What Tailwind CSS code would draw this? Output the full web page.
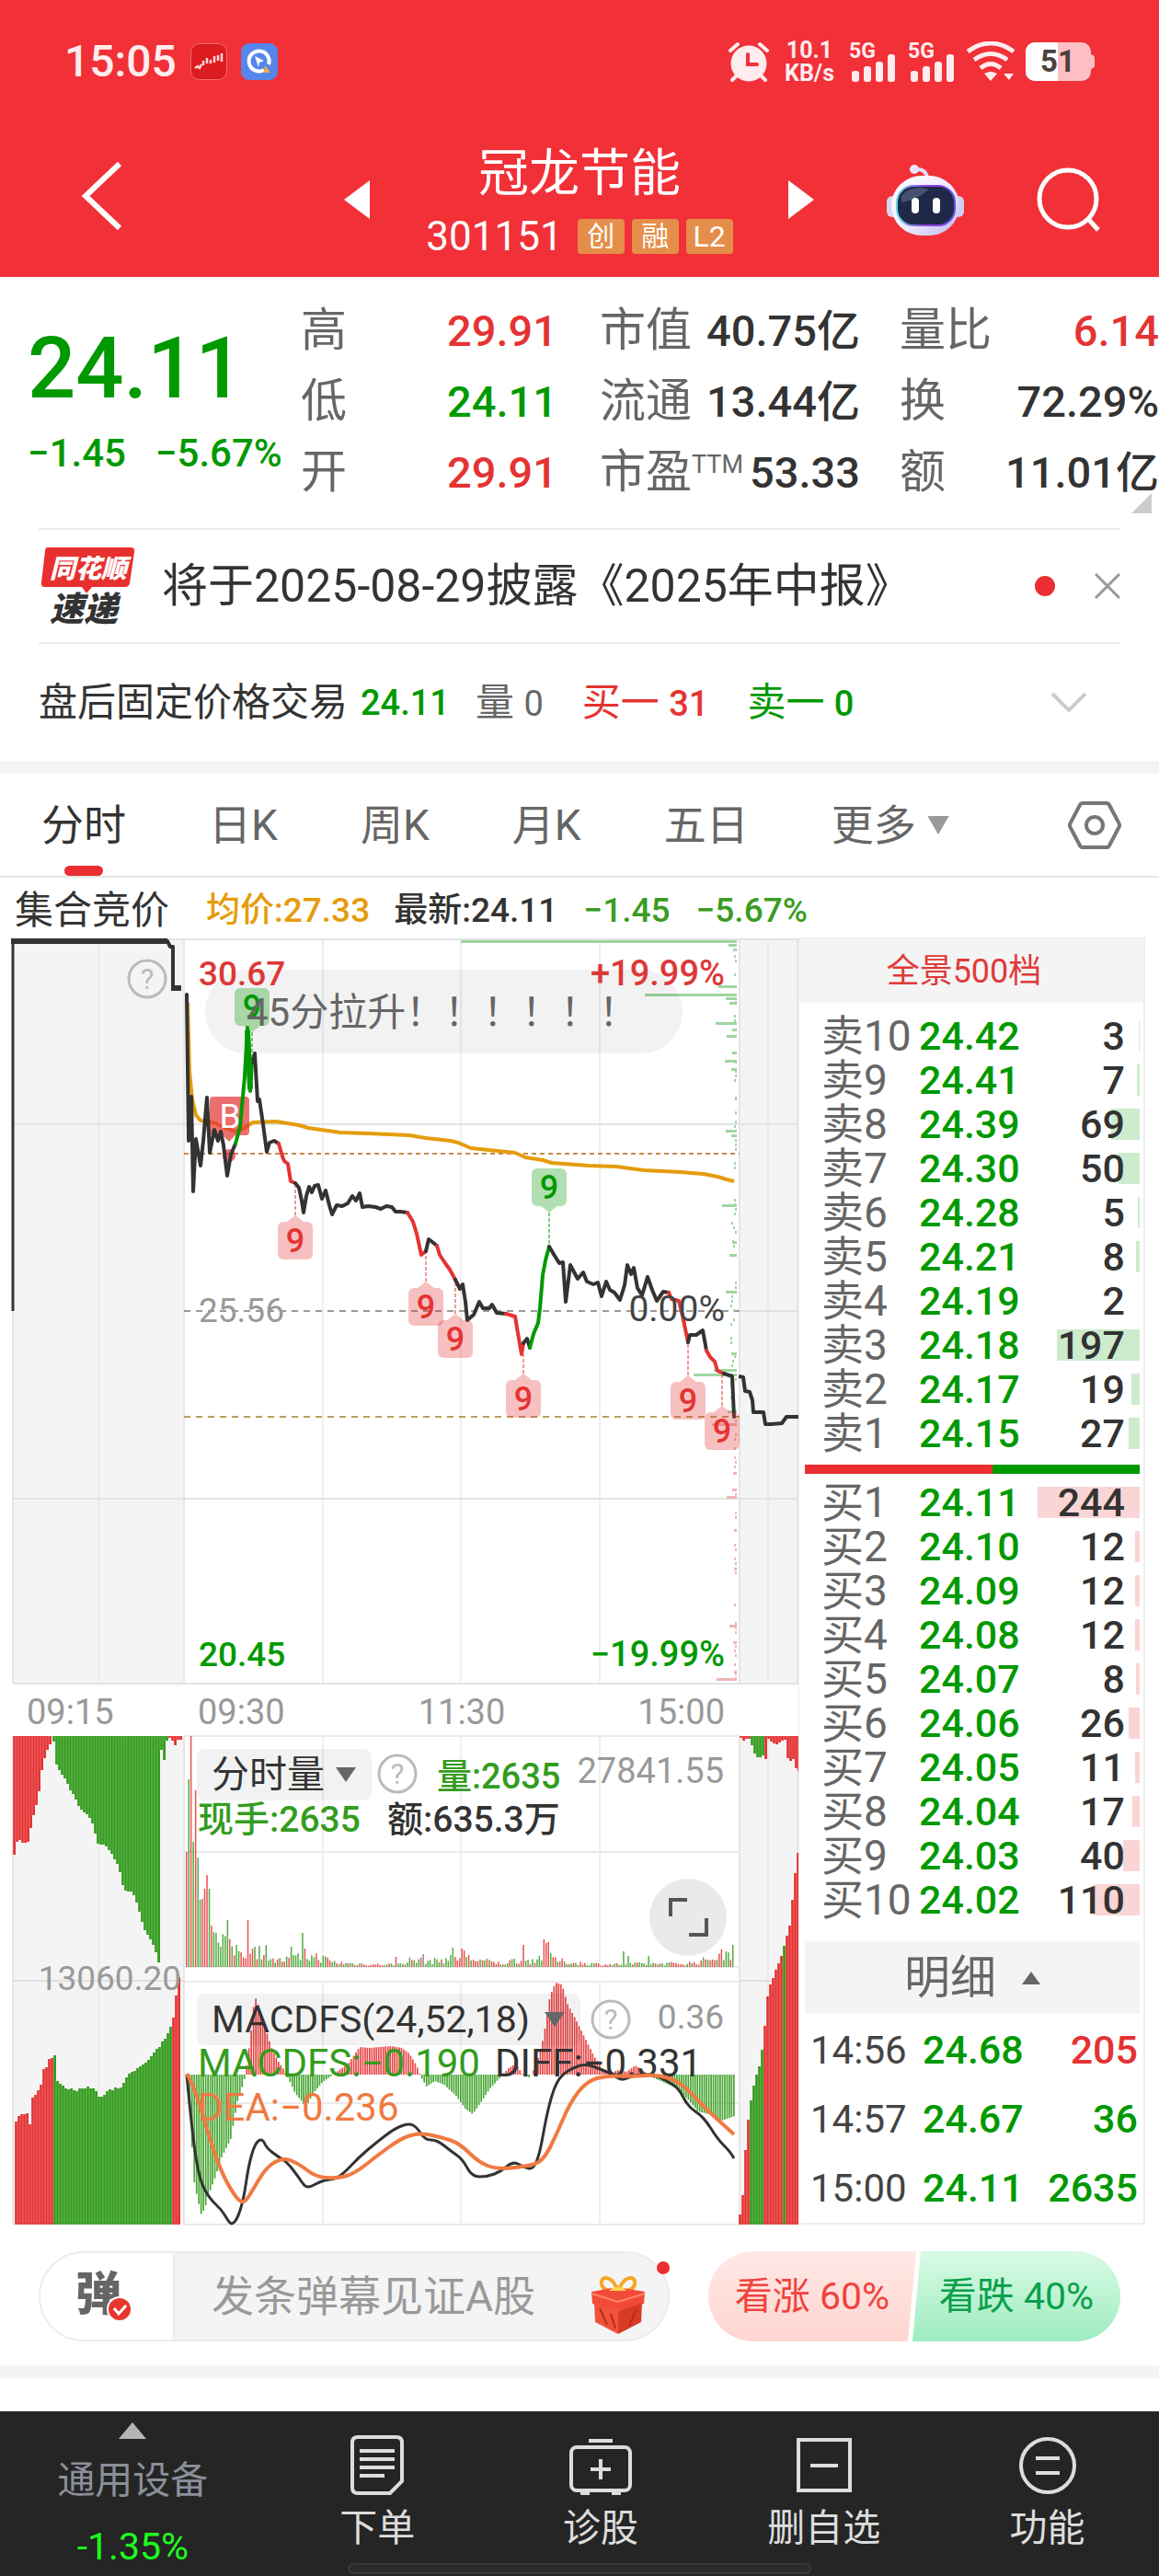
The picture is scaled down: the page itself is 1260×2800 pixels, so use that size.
<!DOCTYPE html>
<html lang="zh-CN">
<head>
<meta charset="utf-8">
<meta name="viewport" content="width=device-width, initial-scale=1">
<title>冠龙节能 301151</title>
<script src="https://cdn.jsdelivr.net/npm/@tailwindcss/browser@4"></script>
</head>
<body class="bg-white text-[#333] font-['Roboto','Noto_Sans_CJK_SC',sans-serif]">
<div class="flex min-h-screen flex-col">

<header class="bg-[#f23038] text-white">
  <div class="flex h-[133px] items-center justify-between pl-[70px] pr-[70px]">
    <div class="flex items-center gap-[15px]">
      <span class="text-[48px] font-medium leading-none text-[#ffecec]">15:05</span>
      <svg class="size-10" viewBox="0 0 40 40"><rect x=".5" y=".5" width="39" height="39" rx="9" fill="#dc1c1f" stroke="#f56b6b"/><path d="M5 27l3-2 2 2 2-4M14 24v-5M18 22v-6M22 22v-4M26 21v-7M30 19v-6M34 20V11" fill="none" stroke="#ffd5d5" stroke-width="2.5"/></svg>
      <svg class="size-10" viewBox="0 0 40 40"><rect width="40" height="40" rx="9" fill="#5586ea"/><path d="M25 29a11 11 0 1 1 5-6" fill="none" stroke="#fff" stroke-width="4"/><path d="M15 14l10 5-5 2-1 5z" fill="#fff"/><path d="M26 24l6 8-7 0z" fill="#f7ab3c"/></svg>
    </div>
    <div class="flex items-center text-[#ffecee]">
      <svg class="h-[44px] w-[46px]" viewBox="0 0 46 44"><circle cx="23" cy="24" r="19.500" fill="currentColor"/><path d="M3 10l8-7M43 10l-8-7M10 37l-5 5M36 37l5 5" stroke="currentColor" stroke-width="4" stroke-linecap="round"/><path d="M22 14v11h10" fill="none" stroke="#f23038" stroke-width="4" stroke-linecap="round"/></svg>
      <div class="ml-4 w-[54px] text-center text-[25px] font-bold leading-[25px]">10.1<br>KB/s</div>
      <svg class="ml-4 h-[44px] w-[52px] overflow-visible" viewBox="0 0 52 44"><g fill="currentColor"><text x="0" y="18" font-size="23" font-weight="700">5G</text><rect x="3" y="32" width="8" height="12" rx="3"/><rect x="16" y="27" width="8" height="17" rx="3"/><rect x="29" y="22" width="8" height="22" rx="3"/><rect x="42" y="14" width="8" height="30" rx="3"/></g></svg>
      <svg class="ml-3 h-[44px] w-[52px] overflow-visible" viewBox="0 0 52 44"><g fill="currentColor"><text x="0" y="18" font-size="23" font-weight="700">5G</text><rect x="3" y="32" width="8" height="12" rx="3"/><rect x="16" y="27" width="8" height="17" rx="3"/><rect x="29" y="22" width="8" height="22" rx="3"/><rect x="42" y="14" width="8" height="30" rx="3"/></g></svg>
      <svg class="ml-3 h-[44px] w-[52px]" viewBox="0 0 52 44"><g fill="none" stroke="currentColor" stroke-width="5"><path d="M1 11Q26-7 51 11"/><path d="M8 20Q26 7 44 20"/><path d="M15 29Q26 20 37 29"/></g><path d="M19 35q7-4 14 0l-7 8zM40 35h11l-5 7z" fill="currentColor"/></svg>
      <svg class="ml-3 h-[44px] w-[75px]" viewBox="0 0 75 44"><rect x="0" y="1" width="71" height="42" rx="10" fill="#fdbfc3"/><path d="M10 1h25v42H10a10 10 0 0 1-10-10V11A10 10 0 0 1 10 1z" fill="#fff"/><path d="M71 14q4 1 4 4v8q0 3-4 4z" fill="#fdbfc3"/><text x="35" y="33" text-anchor="middle" font-size="33" font-weight="700" fill="#4a4040">51</text></svg>
    </div>
  </div>
  <div class="grid h-[168px] grid-cols-[1fr_332px_1fr] items-center">
    <div class="flex items-center justify-between pb-2 pl-[88px] pr-[62px]">
      <button aria-label="返回"><svg class="h-[76px] w-[46px]" viewBox="0 0 46 76"><path d="M42 3L5 38l37 35" fill="none" stroke="#fff" stroke-width="6"/></svg></button>
      <button aria-label="上一只" class="mt-2"><svg class="h-[42px] w-7" viewBox="0 0 28 42"><path d="M28 0v42L0 21z" fill="#fff"/></svg></button>
    </div>
    <div class="flex flex-col items-center pt-1">
      <h1 class="text-[55px] leading-[70px]">冠龙节能</h1>
      <div class="flex items-center gap-2 whitespace-nowrap pt-[6px]">
        <span class="mr-2 text-[44px] leading-[56px]">301151</span>
        <span class="flex h-[38px] w-[51px] items-center justify-center rounded bg-[#e58e49] text-[30px] leading-none">创</span>
        <span class="flex h-[38px] w-[51px] items-center justify-center rounded bg-[#e58e49] text-[30px] leading-none">融</span>
        <span class="flex h-[38px] w-[51px] items-center justify-center rounded bg-[#e58e49] text-[32px] leading-none">L2</span>
      </div>
    </div>
    <div class="flex items-center justify-between pl-[61px] pr-[62px]">
      <button aria-label="下一只"><svg class="h-[42px] w-7" viewBox="0 0 28 42"><path d="M0 0v42l28-21z" fill="#fff"/></svg></button>
      <button aria-label="智能助手"><svg class="h-[80px] w-[84px]" viewBox="0 0 84 80"><defs><linearGradient id="bot" x1="0" y1="0" x2="1" y2="1"><stop offset="0" stop-color="#fff"/><stop offset=".55" stop-color="#eeeaff"/><stop offset="1" stop-color="#b9b6ea"/></linearGradient><linearGradient id="rim"><stop offset="0" stop-color="#66d6e8"/><stop offset=".5" stop-color="#9a3be0"/><stop offset="1" stop-color="#6c4ee8"/></linearGradient></defs><path d="M31 7q12-1 13 10" fill="none" stroke="#e3ddfa" stroke-width="4"/><circle cx="30" cy="7" r="5" fill="#e9e4fb"/><rect x="0" y="36" width="12" height="23" rx="6" fill="#d9d5f3"/><rect x="72" y="36" width="12" height="23" rx="6" fill="#d3cff0"/><rect x="5" y="14" width="74" height="65" rx="33" fill="url(#bot)"/><rect x="11" y="25" width="63" height="43" rx="18" fill="#1f2947" stroke="url(#rim)" stroke-width="2"/><path d="M16 36q6-9 22-9l8 2q-14 12-30 14z" fill="#46506f"/><rect x="27" y="38" width="8" height="17" rx="4" fill="#fff"/><rect x="50" y="38" width="8" height="17" rx="4" fill="#fff"/></svg></button>
      <button aria-label="搜索"><svg class="size-[72px]" viewBox="0 0 72 72"><circle cx="35" cy="35" r="31" fill="none" stroke="#fff" stroke-width="5"/><path d="M57 57l11 12" stroke="#fff" stroke-width="5"/></svg></button>
    </div>
  </div>
</header>

<section class="flex whitespace-nowrap pt-5 text-[47px] font-medium leading-[77px]">
  <div class="w-[327px] shrink-0 pl-[30px] pt-6 text-[#090]">
    <div class="text-[92px] leading-[112px]">24.11</div>
    <div class="flex gap-8 pt-1 text-[42px] leading-[64px]"><span>−1.45</span><span>−5.67%</span></div>
  </div>
  <dl class="w-[279px]">
    <div class="flex justify-between"><dt class="text-[50px] font-normal text-[#666]">高</dt><dd class="text-[#e53333]">29.91</dd></div>
    <div class="flex justify-between"><dt class="text-[50px] font-normal text-[#666]">低</dt><dd class="text-[#090]">24.11</dd></div>
    <div class="flex justify-between"><dt class="text-[50px] font-normal text-[#666]">开</dt><dd class="text-[#e53333]">29.91</dd></div>
  </dl>
  <dl class="ml-[46px] w-[283px]">
    <div class="flex justify-between"><dt class="text-[50px] font-normal text-[#666]">市值</dt><dd>40.75亿</dd></div>
    <div class="flex justify-between"><dt class="text-[50px] font-normal text-[#666]">流通</dt><dd>13.44亿</dd></div>
    <div class="flex justify-between"><dt class="flex text-[50px] font-normal text-[#666]">市盈<span class="text-[27px] leading-[60px]">TTM</span></dt><dd>53.33</dd></div>
  </dl>
  <dl class="ml-[43px] flex-1">
    <div class="flex justify-between"><dt class="text-[50px] font-normal text-[#666]">量比</dt><dd class="text-[#e53333]">6.14</dd></div>
    <div class="flex justify-between"><dt class="text-[50px] font-normal text-[#666]">换</dt><dd>72.29%</dd></div>
    <div class="flex justify-between"><dt class="text-[50px] font-normal text-[#666]">额</dt><dd>11.01亿</dd></div>
  </dl>
</section>
<div class="flex h-[22px] justify-end pr-2"><svg class="-mt-[16px] size-[22px]" viewBox="0 0 22 22"><path d="M22 0v22H0z" fill="#ccc"/></svg></div>

<section class="mx-[42px] flex h-[126px] items-center border-y-2 border-[#ececec]">
  <svg class="ml-[2px] h-[84px] w-[102px] shrink-0 overflow-visible" viewBox="0 0 102 84" font-family="Noto Sans CJK SC" font-weight="900"><path d="M8 0h90q5 0 4 5l-5 34q-1 4-5 4H56l-6 7-5-7H5q-5 0-4-5L5 4q0-4 3-4z" fill="#e8302f"/><text x="10" y="33" font-size="28" font-style="italic" fill="#fff">同花顺</text><text x="10" y="80" font-size="37" font-style="italic" fill="#333">速递</text></svg>
  <a href="#" class="ml-[30px] flex-1 whitespace-nowrap text-[50px] leading-none">将于2025-08-29披露《2025年中报》</a>
  <span class="mr-[43px] size-[22px] rounded-full bg-[#ea2e31]"></span>
  <button aria-label="关闭"><svg class="size-7" viewBox="0 0 28 28"><path d="M1 1l26 26M27 1L1 27" stroke="#999" stroke-width="3"/></svg></button>
</section>

<section class="flex h-[127px] items-center whitespace-nowrap px-[42px] text-[42px] leading-none">
  <span>盘后固定价格交易</span><span class="ml-[14px] text-[38px] font-medium text-[#090]">24.11</span>
  <span class="ml-7 text-[#666]">量 <span class="text-[38px]">0</span></span>
  <span class="ml-[42px] text-[#e53333]">买一 <span class="text-[38px] font-medium">31</span></span>
  <span class="ml-[42px] text-[#090]">卖一 <span class="text-[38px] font-medium">0</span></span>
  <button class="ml-auto mr-9" aria-label="展开"><svg class="h-6 w-10" viewBox="0 0 40 24"><path d="M2 2l18 18L38 2" fill="none" stroke="#ccc" stroke-width="4"/></svg></button>
</section>
<div class="h-[14px] bg-[#f4f4f4]"></div>

<nav class="flex h-[113px] items-center gap-[90px] whitespace-nowrap border-b-2 border-[#e6e6e6] pl-[45px] pr-[41px] text-[46px] leading-none text-[#666]">
  <a href="#" class="relative flex h-full items-center text-[#333]">分时<span class="absolute bottom-0 left-[25px] h-[11px] w-[42px] rounded-full bg-[#ea2e31]"></span></a>
  <a href="#">日K</a><a href="#">周K</a><a href="#">月K</a><a href="#">五日</a>
  <button class="flex items-center gap-3">更多<svg class="h-5 w-6" viewBox="0 0 28 24"><path d="M0 0h28L14 24z" fill="#999"/></svg></button>
  <button class="ml-auto" aria-label="设置"><svg class="h-[54px] w-[58px]" viewBox="0 0 58 54"><path d="M16 3h26q2 0 3 2l10 19q2 3 0 6L45 49q-1 2-3 2H16q-2 0-3-2L3 30q-2-3 0-6L13 5q1-2 3-2z" fill="none" stroke="#777" stroke-width="4"/><circle cx="29" cy="27" r="9" fill="none" stroke="#777" stroke-width="4"/></svg></button>
</nav>

<main>
  <div class="flex h-[65px] items-center whitespace-nowrap pl-4 pt-[6px] text-[37px] font-medium leading-none">
    <span class="text-[42px] font-normal">集合竞价</span>
    <span class="ml-10 text-[#e59c0c]">均价:27.33</span>
    <span class="ml-[26px]">最新:24.11</span>
    <span class="ml-7 text-[#3a9c22]">−1.45</span>
    <span class="ml-7 text-[#3a9c22]">−5.67%</span>
  </div>
  <div class="grid grid-cols-[868fr_377fr_15fr] items-start">
    <figure class="relative min-w-0">
      <svg id="chart" class="block w-full" viewBox="0 1019 868 1400" role="img" aria-label="分时走势"></svg>
      <button class="absolute left-[214px] top-[882px] flex h-14 items-center gap-2 whitespace-nowrap rounded-lg bg-black/5 pl-4 pr-[17px] text-[41px] leading-none">分时量<svg class="ml-1 h-4 w-[22px]" viewBox="0 0 22 16"><path d="M0 0h22L11 16z" fill="#666"/></svg></button>
      <button class="absolute left-[214px] top-[1148px] flex h-14 items-center whitespace-nowrap rounded-lg bg-black/5 pl-4 pr-[17px] text-[41px] leading-none">MACDFS(24,52,18)<svg class="ml-4 h-4 w-[22px]" viewBox="0 0 22 16"><path d="M0 0h22L11 16z" fill="#666"/></svg></button>
      <button aria-label="全屏" class="absolute left-[706px] top-[1023px] size-[84px] rounded-full bg-[#e8e8e8]/90"><svg class="size-full" viewBox="0 0 84 84"><path d="M23 41V23h18M62 43v18H43" fill="none" stroke="#555" stroke-width="4"/></svg></button>
    </figure>
    <aside class="min-w-0 border-2 border-l border-[#eee]">
      <a href="#" class="flex h-[69px] items-center justify-center bg-[#f4f4f4] pr-4 text-[36px] leading-none text-[#e03a3a]">全景500档</a>
      <div class="pl-[6px] pr-[4px]">
        <table class="mt-3 w-full table-fixed text-[43px] font-medium leading-[48px]"><tbody id="asks"></tbody></table>
        <div class="mt-[10px] flex h-[10px]"><span class="flex-[56] bg-[#ea2e31]"></span><span class="flex-[44] bg-[#090]"></span></div>
        <table class="mt-[7px] w-full table-fixed text-[43px] font-medium leading-[48px]"><tbody id="bids"></tbody></table>
        <button class="mt-[21px] flex h-[79px] w-full items-center justify-center gap-7 bg-[#f4f4f4] text-[50px] leading-none text-[#666]">明细<svg class="h-[14px] w-5" viewBox="0 0 20 14"><path d="M0 14h20L10 0z" fill="#666"/></svg></button>
        <table class="mt-[2px] w-full text-[43px] font-medium leading-[75px]">
          <tbody>
            <tr><td class="w-[128px] pl-[6px] text-[42px] font-normal text-[#444]">14:56</td><td class="text-[#090]">24.68</td><td class="pr-[2px] text-right text-[#e53333]">205</td></tr>
            <tr><td class="pl-[6px] text-[42px] font-normal text-[#444]">14:57</td><td class="text-[#090]">24.67</td><td class="pr-[2px] text-right text-[#090]">36</td></tr>
            <tr><td class="pl-[6px] text-[42px] font-normal text-[#444]">15:00</td><td class="text-[#090]">24.11</td><td class="pr-[2px] text-right text-[#090]">2635</td></tr>
          </tbody>
        </table>
      </div>
    </aside>
  </div>

  <div class="grid grid-cols-[686fr_448fr] items-center gap-[42px] px-[42px] pb-[26px] pt-7">
    <div class="relative flex h-[98px] min-w-0">
      <div class="flex min-w-0 flex-1 overflow-hidden rounded-full border-2 border-[#ececec] bg-[#f4f4f4]">
        <button class="w-[146px] shrink-0 border-r-2 border-[#ececec] bg-white" aria-label="弹幕开关"><svg class="ml-[38px] h-[58px] w-[64px] overflow-visible" viewBox="0 0 64 58"><text x="0" y="44" font-size="50" font-weight="900" font-family="Noto Sans CJK SC" fill="#666">弹</text><circle cx="48" cy="43" r="14" fill="#fff"/><circle cx="48" cy="43" r="12" fill="#e8352e"/><path d="M42 42l5 6 8-9" fill="none" stroke="#fff" stroke-width="3"/></svg></button>
        <input aria-label="弹幕" placeholder="发条弹幕见证A股" class="w-0 min-w-0 flex-1 pl-10 text-[46px] placeholder:text-[#999]">
        <svg class="mr-6 mt-6 h-[64px] w-[60px] shrink-0" viewBox="0 0 60 64"><path d="M30 18C24-1 10 0 12 10q2 8 18 8 16 0 18-8C50 0 36-1 30 18z" fill="none" stroke="#f5a623" stroke-width="4"/><path d="M1 18l28-5 30 5-1 13-28 8-28-8z" fill="#f24a38"/><path d="M4 30l26 9v25L5 51z" fill="#f0523c"/><path d="M56 30l-26 9v25l25-13z" fill="#d93a24"/><path d="M1 20l29 9 29-9" fill="none" stroke="#ff8467" stroke-width="2"/><path d="M10 36l8 18M22 42l5 16M50 37l-8 18" stroke="#b92c1c" stroke-width="2"/><path d="M20 17h19l-4-4H25z" fill="#ffd34e"/></svg>
      </div>
      <span class="absolute right-0 top-[11px] size-[14px] rounded-full bg-[#ea2e31]"></span>
    </div>
    <div class="flex h-[98px] min-w-0 overflow-hidden whitespace-nowrap rounded-full text-[41px] leading-none">
      <button class="flex-1 bg-linear-to-b from-[#ffe9e6] to-[#ffd5d0] text-[#f0433c] [clip-path:polygon(0_0,100%_0,96%_100%,0_100%)]">看涨 60%</button>
      <button class="-ml-1 flex-1 bg-linear-to-b from-[#d8fae5] to-[#9eecc0] text-[#0aa04b] [clip-path:polygon(4%_0,100%_0,100%_100%,0_100%)]">看跌 40%</button>
    </div>
  </div>
  <div class="h-[14px] bg-[#f4f4f4]"></div>
</main>

<footer class="relative mt-auto flex h-[179px] items-start whitespace-nowrap bg-[#252525] text-[41px] leading-[50px] text-[#ddd]">
  <a href="#" class="flex flex-[289] flex-col items-center pt-3">
    <svg class="h-[18px] w-[30px]" viewBox="0 0 30 18"><path d="M15 0l15 18H0z" fill="#b5b5b5"/></svg>
    <span class="mt-5 text-[#8b8f99]">通用设备</span><span class="mt-[22px] text-[#1eff1e]">-1.35%</span>
  </a>
  <a href="#" class="flex flex-[243] flex-col items-center pt-[26px]"><svg class="h-[66px] w-[68px]" viewBox="0 0 68 66" fill="none" stroke="#ddd" stroke-width="4"><path d="M13 2h42q6 0 6 6v42L48 63H13q-6 0-6-6V8q0-6 6-6z"/><path d="M15 17h38M15 26h38M15 35h38M15 44h27"/></svg><span class="mt-[10px]">下单</span></a>
  <a href="#" class="flex flex-[243] flex-col items-center pt-[26px]"><svg class="h-[66px] w-[68px]" viewBox="0 0 68 66" fill="none" stroke="#ddd" stroke-width="4"><rect x="2" y="13" width="64" height="47" rx="6"/><path d="M21 6h26M34 26v22M23 37h22M12 63h10M46 63h10"/></svg><span class="mt-[10px]">诊股</span></a>
  <a href="#" class="flex flex-[243] flex-col items-center pt-[26px]"><svg class="h-[66px] w-[68px]" viewBox="0 0 68 66" fill="none" stroke="#ddd" stroke-width="4"><rect x="6" y="5" width="56" height="55"/><path d="M19 33h30"/></svg><span class="mt-[10px]">删自选</span></a>
  <a href="#" class="flex flex-[243] flex-col items-center pt-[26px]"><svg class="h-[66px] w-[68px]" viewBox="0 0 68 66" fill="none" stroke="#ddd" stroke-width="4"><circle cx="34" cy="33" r="29"/><path d="M21 25h26M21 41h26"/></svg><span class="mt-[10px]">功能</span></a>
  <span class="absolute bottom-[2px] left-[30%] right-[30%] h-3 rounded-full border-2 border-[#3a3a3a] bg-[#2b2b2b]"></span>
</footer>
</div>

<script>
// Order book: [volume, price] per level
const asks = [[3,'24.42'],[7,'24.41'],[69,'24.39'],[50,'24.30'],[5,'24.28'],[8,'24.21'],[2,'24.19'],[197,'24.18'],[19,'24.17'],[27,'24.15']];
const bids = [[244,'24.11'],[12,'24.10'],[12,'24.09'],[12,'24.08'],[8,'24.07'],[26,'24.06'],[11,'24.05'],[17,'24.04'],[40,'24.03'],[110,'24.02']];
const bookRow = (label, [vol, price], tint) => `<tr><th scope="row" class="w-[124px] whitespace-nowrap pl-[18px] text-left text-[46px] font-normal text-[#666]">${label}</th><td class="text-[#090]">${price}</td><td class="relative w-[130px] text-right"><span class="absolute right-0 top-[7px] h-[34px] ${tint}" style="width:${vol > 2 ? Math.max(1, Math.round(vol * 0.455)) : 0}px"></span><span class="relative mr-4">${vol}</span></td></tr>`;
document.getElementById('asks').innerHTML = asks.map((r, i) => bookRow('卖' + (10 - i), r, 'bg-[#cdebcd]')).join('');
document.getElementById('bids').innerHTML = bids.map((r, i) => bookRow('买' + (i + 1), r, 'bg-[#fad5d5]')).join('');

// Chart
const RED = '#e53333', GREEN = '#349c1e', INK = '#333';
let seed = 7;
const rnd = () => (seed = (seed * 16807) % 2147483647) / 2147483647;
const out = [];
const rect = (x, y, w, h, f, extra = '') => out.push(`<rect x="${x}" y="${y}" width="${w}" height="${h}" fill="${f}" ${extra}/>`);
const line = (d, c, w, extra = '') => out.push(`<path d="M${d}" fill="none" stroke="${c}" stroke-width="${w}" stroke-linejoin="round" ${extra}/>`);
const text = (x, y, s, c, size = 37, extra = '') => out.push(`<text x="${x}" y="${y}" fill="${c}" font-size="${size}" ${extra}>${s}</text>`);
const at = (pts, x) => {
  for (let i = 1; i < pts.length; i++) if (x <= pts[i][0]) {
    const [a, b] = [pts[i - 1], pts[i]];
    return a[1] + (b[1] - a[1]) * (x - a[0]) / (b[0] - a[0] || 1);
  }
  return pts[pts.length - 1][1];
};
const P = s => s.split(' ').map(p => p.split(',').map(Number));

// Panels and grid
rect(14, 1021, 186, 809, '#f4f4f4'); rect(804, 1021, 64, 809, '#f4f4f4');
rect(14, 1887, 186, 531, '#f4f4f4'); rect(804, 1887, 64, 531, '#f4f4f4');
for (const [y1, y2] of [[1021, 1830], [1887, 2138], [2154, 2418]])
  for (const x of [351, 501, 652]) line(`${x},${y1}V${y2}`, '#e0e0e0', 1);
for (const [y1, y2] of [[1021, 1830], [1887, 2418]]) {
  for (const x of [107, 835]) line(`${x},${y1}V${y2}`, '#e0e0e0', 1);
  for (const x of [14, 200, 804, 867]) line(`${x},${y1}V${y2}`, '#e6e6e6', 2);
}
for (const y of [1021, 1222, 1629, 1830]) line(`14,${y}H868`, '#e3e3e3', 2);
for (const y of [1887, 2013, 2138, 2154, 2286, 2418]) line(`200,${y}H804`, '#eaeaea', 2);
line('14,2153H200M804,2153H868M804,1425H868', '#e0e0e0', 2);
line('200,1254H804', '#c98a45', 2, 'stroke-dasharray="5 4"');
line('200,1425H804', '#999', 2, 'stroke-dasharray="7 6"');
line('200,1540H804', '#b8a05c', 2, 'stroke-dasharray="7 6"');

// Volume by price
const prof = {1024:300,1028:9,1033:4,1073:20,1082:100,1086:12,1091:8,1113:23,1120:5,1127:11,1145:5,1154:13,1163:6,1194:2,1230:12,1235:6,1311:16,1351:5,1365:8,1405:12,1472:6,1490:25,1495:47,1535:10,1549:27,1602:4,1620:5,1628:11,1664:3,1706:3,1768:8,1786:4,1818:3,1826:22};
for (let y = 1038; y < 1826; y += 5) if (rnd() < .5) rect(799 - (rnd() * (y < 1540 && y > 1320 ? 6 : 2) | 0), y, 2, 3, y < 1545 ? '#a0d5a2' : '#f0b4b8');
for (const y in prof) rect(801 - prof[y], y - 2, prof[y], 3, y < 1545 ? '#a0d5a2' : '#f0b4b8');

// Comment pill
rect(223, 1054, 519, 91, '#000', 'rx="45" opacity=".05"');

// Auction and after-hours
line('14,1425V1022', INK, 3); line('12,1023H182L185,1029H188V1073', INK, 4); line('12,1023H182', INK, 6); line('186,1074H197', INK, 6);
line('803,1496L808,1497 810,1512 815,1513 818,1522 819,1535 830,1535 832,1548 838,1548 850,1547 855,1540 868,1540', INK, 4);

// Average and price
line('204,1090 206,1165 209,1195 213,1212 218,1218 232,1220 245,1226 255,1230 264,1227 275,1220 300,1219 325,1223 335,1226 370,1231 400,1232 445,1234 463,1237 490,1240 498,1242 512,1248 560,1253 571,1258 590,1261 600,1264 640,1267 670,1268 700,1272 740,1274 765,1276 780,1279 790,1282 798,1284', '#e59c0c', 4);

const flag = (x, tip, base, up, c, bg) => {
  // up = box above the line (green), otherwise below it
  const top = up ? tip - 48 : tip + 7;
  const ptr = up ? `M${x - 9} ${top + 41}h18l-9 7z` : `M${x - 9} ${top}h18l-9-7z`;
  line(`${x},${tip}V${base}`, c, 1, 'stroke-dasharray="4 2"');
  out.push(`<g opacity=".3" fill="${bg}"><rect x="${x - 19}" y="${top}" width="38" height="41" rx="6"/><path d="${ptr}"/></g>`);
  text(x, top + 33, '9', c, 36, 'text-anchor="middle"');
};
out.push('<g fill="#e53333" opacity=".7"><rect x="228" y="1192" width="43" height="42" rx="4"/><path d="M242 1234h14l-7 7z"/><circle cx="249" cy="1256" r="7"/></g>');
text(250, 1226, 'B', '#fff', 37, 'text-anchor="middle" font-weight="400"');
const segs = [
 [INK,'203,1081 205,1240 208,1192 210,1295 213,1238 218,1267 221,1240 225,1193 228,1253 233,1228 237,1240 240,1230 243,1245 247,1278 251,1255 256,1243'],
 ['#090','256,1243 261,1225 266,1170 269,1117 272,1186 274,1155'],
 [INK,'274,1155 277,1145 280,1197 282,1195 286,1222 290,1252 293,1242 298,1240 303,1243'],
 [RED,'303,1243 307,1257 309,1262 313,1265 316,1284 321,1286'],
 [INK,'321,1286 325,1291 328,1305 330,1318 333,1300 336,1290 339,1296 342,1289 346,1288 350,1303 354,1294 358,1310 361,1320 366,1310 372,1311 378,1308 383,1300 387,1305 391,1297 394,1312 400,1311 408,1312 414,1314 420,1311 426,1312 430,1317 435,1317 443,1318'],
 [RED,'443,1318 449,1328 453,1341 458,1364 463,1360'],
 [INK,'463,1360 466,1347 470,1350 475,1354'],
 [RED,'475,1354 478,1364 484,1373 489,1380 495,1391'],
 [INK,'495,1391 500,1401 503,1396 506,1415 508,1435 515,1429 521,1415 525,1422 532,1422 535,1418 540,1427 550,1428'],
 [RED,'550,1428 560,1431 563,1449 567,1472 569,1460'],
 [INK,'569,1460 573,1455 576,1465'],
 ['#090','576,1465 580,1450 585,1438 587,1422 590,1386 593,1370 597,1355'],
 [INK,'597,1355 603,1365 608,1373 612,1372 615,1415 620,1375 628,1390 634,1383 638,1393 645,1396 650,1394 654,1409 659,1393 663,1402 668,1405 674,1413 679,1397 682,1375 686,1385 689,1378 693,1400 698,1408 704,1388 709,1402 714,1414 721,1404 727,1405'],
 [RED,'727,1405 730,1412 738,1414 742,1430 748,1459'],
 [INK,'748,1459 750,1451 757,1451 764,1446 768,1468'],
 [RED,'768,1468 772,1475 777,1480 780,1490 787,1493'],
 [INK,'787,1493 790,1494 796,1496 798,1540']];
for (const [c, d] of segs) line(d, c, 4, 'stroke-linecap="round"');
line('269,1120L272,1184', '#090', 6);
flag(274, 1122, 1155, true, '#090', '#009900'); flag(597, 1318, 1355, true, '#090', '#009900');
for (const [x, t, b] of [[321,1321,1288],[463,1393,1362],[495,1428,1392],[569,1493,1472],[748,1495,1460],[785,1528,1494]]) flag(x, t, b, false, RED, RED);

// Price labels
text(216, 1071, '30.67', '#dd3838'); text(788, 1071, '+19.99%', '#dd3838', 38, 'text-anchor="end"');
text(216, 1437, '25.56', '#999', 37, 'font-weight="400"'); text(788, 1436, '0.00%', '#444', 39, 'text-anchor="end" font-weight="400"');
text(216, 1811, '20.45', '#090'); text(788, 1811, '−19.99%', '#090', 38, 'text-anchor="end"');
text(268, 1115, '45分拉升！！！！！！', '#666', 42, 'font-weight="400"');
text(29, 1874, '09:15', '#999', 38, 'font-weight="400"'); text(215, 1874, '09:30', '#999', 38, 'font-weight="400"');
text(502, 1874, '11:30', '#999', 38, 'font-weight="400" text-anchor="middle"'); text(788, 1874, '15:00', '#999', 38, 'font-weight="400" text-anchor="end"');
const help = (x, y) => { out.push(`<circle cx="${x}" cy="${y}" r="20" fill="none" stroke="#bbb" stroke-width="3"/>`); text(x, y + 11, '?', '#bbb', 31, 'text-anchor="middle" font-weight="400"'); };
help(160, 1064);

// Auction volume strips
const strip = (pts, x1, x2, base, color) => {
  for (let x = x1; x < x2; x += 3) {
    const y = Math.round(at(pts, x) + rnd() * 3);
    rect(x, Math.min(y, base), 3, Math.abs(base - y), color(x));
    line(`${x},${base}V${y}`, '#fff', 1, 'opacity=".28"');
  }
};
strip(P('14,2014 17,1999 30,2002 33,1978 40,1955 45,1915 50,1900 56,1889'), 14, 56, 1887, () => RED);
strip(P('57,1890 60,1918 70,1935 75,1945 87,1965 98,1975 105,2002 115,2006 122,2017 128,2028 133,2052 143,2054 148,2070 155,2093 160,2104 168,2119 172,2135 173,2135 174,1900 178,1914 180,1890'), 57, 182, 1887, () => GREEN);
strip(P('183,1888 189,1895 194,1888'), 183, 196, 1887, () => RED);
strip(P('16,2304 20,2296 28,2296 31,2306 34,2278 42,2269 46,2248 50,2245 52,2237 58,2233 59,2257 68,2267 80,2271 100,2267 106,2278 120,2270 130,2267 140,2251 150,2245 160,2237 170,2226 180,2211 186,2198 188,2184 190,2167 194,2140'), 16, 196, 2418, x => x < 57 || x > 186 ? RED : GREEN);
strip(P('804,1888 810,1890 814,1887 817,1900 822,1908 828,1908 830,1888 832,1930 834,1888 840,1894 846,1892 852,1888 856,1915 861,1910 865,1925'), 804, 868, 1887, x => x > 814 && x < 830 ? GREEN : RED);
strip(P('803,2404 806,2383 809,2337 812,2304 815,2282 819,2258 825,2240 829,2215 832,2174 836,2156 842,2141 848,2125 853,2108 858,2089 862,2041 866,2013'), 803, 868, 2418, x => (x > 813 && x < 830) || x === 851 ? GREEN : RED);

// Minute volume
const peaks = {0:[125,0],1:[204,1],2:[251,0],3:[136,1],4:[192,0],5:[119,1],6:[73,1],7:[74,0],8:[85,0],9:[100,0],10:[85,1],11:[45,0],12:[38,1],18:[51,1],19:[30,0],27:[51,0],30:[22,1],46:[22,1],51:[37,1],52:[20,0],92:[11,0],104:[14,2],117:[21,1],121:[20,0],122:[18,0],148:[24,0],157:[30,0],158:[26,0],159:[27,0],192:[17,1],194:[12,1],203:[12,1],240:[24,1]};
const vol = P('202,60 225,55 232,32 245,24 262,20 290,18 300,7 330,12 345,12 365,5 400,3 432,3 445,8 470,7 503,12 520,8 545,4 560,8 575,7 592,14 603,8 620,5 660,3 720,4 745,4 760,6 775,12 798,18');
for (let i = 0; i <= 240; i++) {
  const x = 202 + i * 2.475, p = peaks[i], h = p ? p[0] : at(vol, x) * (.4 + rnd());
  const k = p ? p[1] : rnd() < .5 ? 0 : 1;
  rect(x.toFixed(1), (2138 - h).toFixed(1), 1.5, h.toFixed(1), [RED, GREEN, '#777'][k], 'opacity=".85"');
}

// MACD
const hist = P('203,2256 206,2300 210,2370 214,2390 218,2407 222,2400 226,2385 232,2370 240,2345 250,2325 257,2285 262,2270 266,2256 268,2240 272,2210 276,2169 282,2185 288,2205 294,2225 300,2238 308,2250 310,2255 313,2260 320,2275 332,2290 340,2275 350,2263 360,2256 368,2250 378,2243 390,2225 400,2226 425,2224 436,2226 444,2232 452,2245 457,2258 463,2268 472,2262 482,2266 495,2278 505,2292 513,2298 522,2285 532,2270 545,2256 552,2248 560,2243 568,2256 575,2258 582,2245 590,2215 597,2170 603,2155 610,2157 616,2178 625,2195 635,2215 645,2235 655,2250 662,2255 670,2250 680,2252 690,2245 700,2252 708,2258 720,2263 735,2270 748,2283 758,2295 770,2298 780,2306 790,2303 798,2300');
for (let i = 0; i <= 240; i++) {
  const x = 203 + i * 2.475, y = at(hist, x);
  rect(x.toFixed(1), Math.min(y, 2255).toFixed(1), 1.7, Math.abs(y - 2255).toFixed(1), y < 2255 ? RED : GREEN, 'opacity=".9"');
}
help(432, 1928); help(664, 2195);
text(475, 1944, '量:2635', GREEN, 38); text(787, 1938, '27841.55', '#999', 38, 'text-anchor="end" font-weight="400"');
text(215, 1991, '现手:2635', GREEN, 39); text(421, 1991, '额:635.3万', INK, 39);
text(197, 2163, '13060.20', '#999', 37, 'text-anchor="end" font-weight="400"');
text(787, 2205, '0.36', '#999', 37, 'text-anchor="end" font-weight="400"');
text(215, 2257, 'MACDFS:−0.190', GREEN, 42, 'font-weight="400"');
text(538, 2257, 'DIFF:−0.331', INK, 42, 'font-weight="400"');
text(215, 2305, 'DEA:−0.236', '#f07a42', 42, 'font-weight="400"');
const smooth = s => { const p = P(s); let d = p[0].join(); for (let i = 1; i < p.length - 1; i++) d += `Q${p[i]} ${(p[i][0] + p[i + 1][0]) / 2},${(p[i][1] + p[i + 1][1]) / 2}`; return d + 'L' + p[p.length - 1]; };
line(smooth('203,2255 209,2320 217,2370 228,2390 241,2402 248,2414 252,2418 258,2412 265,2390 270,2355 277,2330 285,2324 290,2335 302,2344 312,2350 325,2367 333,2379 345,2373 352,2370 366,2368 376,2360 390,2345 410,2328 430,2313 445,2308 453,2312 462,2326 475,2326 490,2338 503,2347 513,2366 530,2366 545,2360 558,2349 570,2356 580,2358 587,2340 594,2300 602,2270 610,2256 622,2248 637,2243 655,2250 665,2254 676,2262 690,2255 712,2255 725,2262 738,2270 748,2290 765,2301 780,2325 793,2338 798,2346'), INK, 3);
line(smooth('203,2254 212,2270 225,2315 240,2360 255,2387 265,2396 275,2380 290,2355 308,2345 325,2352 343,2366 365,2368 385,2363 410,2343 435,2325 455,2318 480,2323 500,2330 520,2350 540,2358 570,2355 590,2350 605,2320 620,2285 638,2262 660,2256 690,2257 715,2255 740,2263 765,2290 798,2320'), '#f07a42', 4);
document.getElementById('chart').innerHTML = `<g font-weight="500">${out.join('')}</g>`;
</script>
</body>
</html>
